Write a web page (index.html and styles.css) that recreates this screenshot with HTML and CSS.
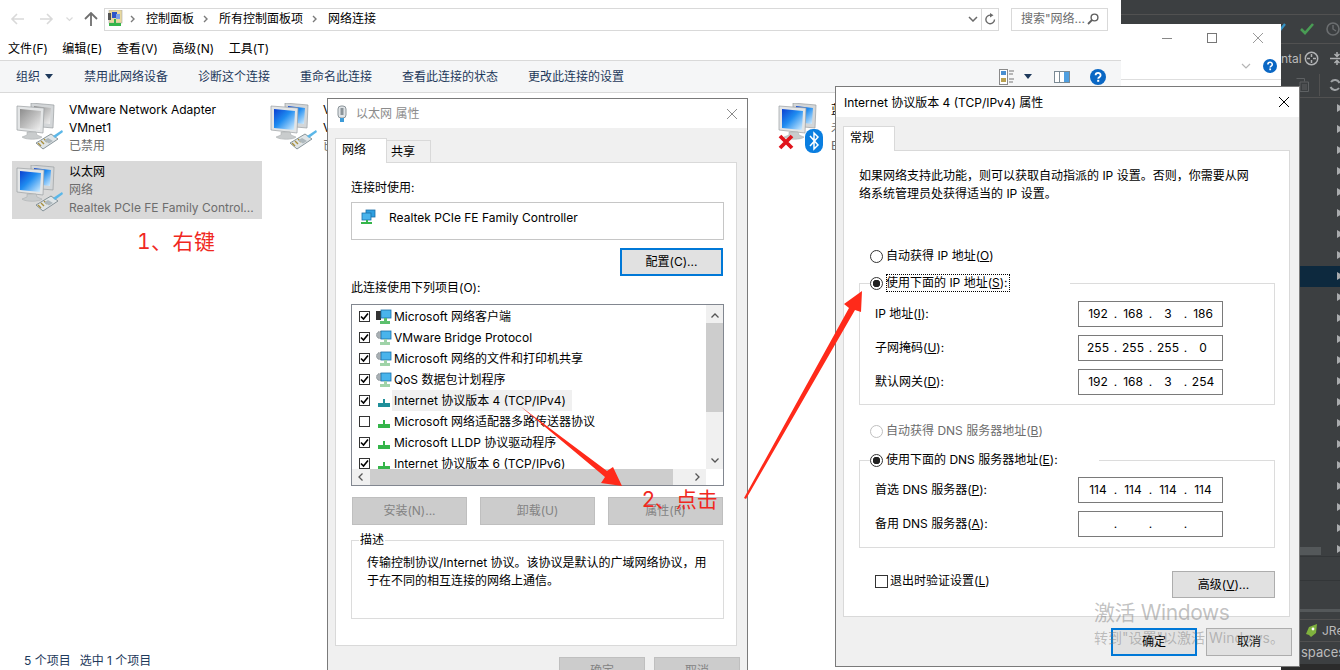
FILE: index.html
```html
<!DOCTYPE html>
<html lang="zh-CN">
<head>
  <meta charset="UTF-8" />
  <title>网络连接</title>
  <link rel="stylesheet" href="styles.css">
</head>
<body>

<svg class="defs" width="0" height="0">
  <defs>
    <linearGradient id="blue" x1="0" y1="0" x2="1" y2="1">
      <stop offset="0" stop-color="#0a3fd0"/><stop offset=".45" stop-color="#1f8cf0"/><stop offset="1" stop-color="#d8f0ff"/>
    </linearGradient>
    <linearGradient id="grey" x1="0" y1="0" x2="1" y2="1">
      <stop offset="0" stop-color="#8d8d8d"/><stop offset=".5" stop-color="#bdbdbd"/><stop offset="1" stop-color="#f2f2f2"/>
    </linearGradient>
    <symbol id="plug" viewBox="0 0 48 48">
      <path d="M20 40l15-9 7 5-15 10z" fill="#dfe4e6" stroke="#7d8a90" stroke-width=".9"/>
      <path d="M22 40l3 3M25 38l3 3M28 36l3 3" stroke="#a88f3d" stroke-width="1.400"/>
      <path d="M32 35l5 3-4 2.500-5-3z" fill="#aeb8bd"/>
      <path d="M37 33l9-6 1 2-8 6z" fill="#5bb7e8"/>
    </symbol>
    <symbol id="pc" viewBox="0 0 48 48">
      <path d="M15 0l23 2-1 23-22-2z" fill="#d3d6d8" stroke="#9a9da0" stroke-width=".7"/>
      <path d="M18 3l17 2-1 16-16-2z" fill="url(#blue)"/>
      <path d="M1 3l27 2-1 25-26-3z" fill="#e3e5e6" stroke="#9a9da0" stroke-width=".7"/>
      <path d="M4 6l21 2-1 19-20-2z" fill="url(#blue)"/>
      <path d="M11 29h9l1 3 5 2c-2 3-17 3-20 0l5-2z" fill="#c9cccd" stroke="#a5a8aa" stroke-width=".5"/>
      <use href="#plug" width="48" height="48"/>
    </symbol>
    <symbol id="pc-off" viewBox="0 0 48 48">
      <path d="M15 0l23 2-1 23-22-2z" fill="#d3d6d8" stroke="#9a9da0" stroke-width=".7"/>
      <path d="M18 3l17 2-1 16-16-2z" fill="url(#grey)"/>
      <path d="M1 3l27 2-1 25-26-3z" fill="#e3e5e6" stroke="#9a9da0" stroke-width=".7"/>
      <path d="M4 6l21 2-1 19-20-2z" fill="url(#grey)"/>
      <path d="M11 29h9l1 3 5 2c-2 3-17 3-20 0l5-2z" fill="#c9cccd" stroke="#a5a8aa" stroke-width=".5"/>
      <use href="#plug" width="48" height="48"/>
    </symbol>
    <symbol id="pc-bare" viewBox="0 0 48 48">
      <path d="M15 0l23 2-1 23-22-2z" fill="#d3d6d8" stroke="#9a9da0" stroke-width=".7"/>
      <path d="M18 3l17 2-1 16-16-2z" fill="url(#blue)"/>
      <path d="M1 3l27 2-1 25-26-3z" fill="#e3e5e6" stroke="#9a9da0" stroke-width=".7"/>
      <path d="M4 6l21 2-1 19-20-2z" fill="url(#blue)"/>
      <path d="M11 29h9l1 3 5 2c-2 3-17 3-20 0l5-2z" fill="#c9cccd" stroke="#a5a8aa" stroke-width=".5"/>
    </symbol>
    <symbol id="adapter" viewBox="0 0 16 16">
      <rect x="6" y="1" width="9" height="7" fill="#2e9fe0" stroke="#1c6fa8" stroke-width=".8"/>
      <rect x="2" y="4" width="9" height="7" fill="#49b4ec" stroke="#1c6fa8" stroke-width=".8"/>
      <path d="M6 11h2v2h4v2H1v-2h5z" fill="#35b54a"/>
    </symbol>
    <symbol id="service" viewBox="0 0 16 16">
      <circle cx="4" cy="5" r="3.500" fill="#a9b0b4" stroke="#7f878b" stroke-dasharray="1.200 .8"/>
      <rect x="5" y="1" width="10" height="8" fill="#49b4ec" stroke="#1c6fa8" stroke-width=".8"/>
      <path d="M8 9h3v3h3v3H4v-3h4z" fill="#9fd3a8"/>
    </symbol>
    <symbol id="client" viewBox="0 0 16 16">
      <rect x="0" y="2" width="5" height="9" fill="#333"/>
      <rect x="5" y="1" width="10" height="8" fill="#49b4ec" stroke="#1c6fa8" stroke-width=".8"/>
      <path d="M8 9h3v3h3v3H4v-3h4z" fill="#5cc06d"/>
    </symbol>
    <symbol id="proto" viewBox="0 0 16 16">
      <path d="M7 6h2v4h5v4H2v-4h5z" fill="#35b54a"/>
    </symbol>
    <symbol id="proto-teal" viewBox="0 0 16 16">
      <path d="M7 6h2v4h5v4H2v-4h5z" fill="#1f8f9a"/>
    </symbol>
    <symbol id="help" viewBox="0 0 16 16">
      <circle cx="8" cy="8" r="8" fill="#0a67c4"/>
      <path d="M5.600 6.200c0-3.200 5-3.200 5 0 0 2-2.400 2-2.400 3.600" fill="none" stroke="#fff" stroke-width="1.800"/>
      <rect x="7.200" y="10.800" width="2" height="2" fill="#fff"/>
    </symbol>
    <symbol id="close" viewBox="0 0 12 12">
      <path d="M1 1l10 10M11 1L1 11" fill="none" stroke="currentColor" stroke-width="1"/>
    </symbol>
    <symbol id="chev" viewBox="0 0 8 8">
      <path d="M2 1l3 3-3 3" fill="none" stroke="#7a7a7a" stroke-width="1.400"/>
    </symbol>
  </defs>
</svg>

<!-- IDE behind everything -->
<div class="window ide">
  <div class="ide-row ide-top"></div>
  <div class="ide-row ide-tools">
    <svg width="16" height="14" viewBox="0 0 16 14"><path d="M2 8l4 4 8-10" fill="none" stroke="#3592c4" stroke-width="2.400"/></svg>
    <svg class="ide-check" width="14" height="12" viewBox="0 0 14 12"><path d="M1 6l4 4 8-9" fill="none" stroke="#499c54" stroke-width="2.600"/></svg>
    <svg class="ide-clock" width="14" height="14" viewBox="0 0 14 14"><circle cx="7" cy="7" r="6" fill="none" stroke="#6b6e70" stroke-width="1.600"/><path d="M7 3v4l3 2" fill="none" stroke="#6b6e70" stroke-width="1.400"/></svg>
  </div>
  <div class="ide-row ide-tools ide-tools-2">
    <span class="ide-tab">ntal</span>
    <svg class="ide-target" width="15" height="15" viewBox="0 0 15 15"><circle cx="7.500" cy="7.500" r="6.200" fill="none" stroke="#afb1b3" stroke-width="1.500"/><path d="M7.500 3v3M7.500 9v3M3 7.500h3M9 7.500h3" stroke="#afb1b3" stroke-width="1.500"/></svg>
    <svg width="14" height="15" viewBox="0 0 14 15"><path d="M0 7.500h14M7 1v4M4.500 3L7 5.500L9.500 3M7 14v-4M4.500 12L7 9.500L9.500 12" fill="none" stroke="#afb1b3" stroke-width="1.500"/></svg>
  </div>
  <div class="ide-row ide-tools ide-tools-3">
    <svg width="13" height="14" viewBox="0 0 13 14"><path d="M.5.500h8v3M4 4h8.500v9.500H4z" fill="none" stroke="#5e6163"/><path d="M6 7h5M6 9h5M6 11h5" stroke="#5e6163"/></svg>
    <span class="ide-sep"></span>
    <svg width="12" height="14" viewBox="0 0 12 14"><path d="M10.500 5A5 5 0 0 0 2 4M1.500 9A5 5 0 0 0 10 10" fill="none" stroke="#9fa2a4" stroke-width="2"/></svg>
  </div>
  <div class="ide-tree">
    <div class="tree-row"></div><div class="tree-row"></div><div class="tree-row"></div><div class="tree-row"></div>
    <div class="tree-row"></div><div class="tree-row"></div><div class="tree-row"></div><div class="tree-row"></div>
    <div class="tree-row selected"></div><div class="tree-row"></div><div class="tree-row"></div><div class="tree-row"></div>
    <div class="tree-row"></div><div class="tree-row"></div><div class="tree-row"></div><div class="tree-row"></div>
    <div class="tree-row"></div><div class="tree-row"></div><div class="tree-row"></div><div class="tree-row"></div>
    <div class="tree-row"></div><div class="tree-row last"></div>
  </div>
  <div class="ide-bottom">
    <div class="ide-sec"></div>
    <div class="ide-bar"></div>
    <div class="ide-run">
      <svg width="15" height="15" viewBox="0 0 15 15"><path d="M13 1L5 4 2 11l3 1 2 2 5-4z" fill="#7fb23e"/><circle cx="9" cy="6" r="1.400" fill="#fff"/></svg>
      <span>JRel</span>
    </div>
    <div class="ide-spaces">spaces</div>
  </div>
  <div class="ide-foot"></div>
</div>

<!-- window behind the explorer -->
<div class="window backwin">
  <div class="backwin-title">
    <span class="ctl-min"></span>
    <span class="ctl-max"></span>
    <svg class="ctl-x" width="12" height="12"><use href="#close"/></svg>
  </div>
  <div class="backwin-tools">
    <svg width="10" height="6" viewBox="0 0 10 6"><path d="M1 1l4 4 4-4" fill="none" stroke="#b5b5b5" stroke-width="1.200"/></svg>
    <svg width="14" height="14"><use href="#help"/></svg>
  </div>
</div>

<!-- explorer -->
<div class="window explorer">
  <div class="nav">
    <svg class="nav-btn" width="14" height="12" viewBox="0 0 14 12"><path d="M7 1L2 6l5 5M2 6h12" fill="none" stroke="#d9d9d9" stroke-width="1.600"/></svg>
    <svg class="nav-btn fwd" width="14" height="12" viewBox="0 0 14 12"><path d="M7 1l5 5-5 5M12 6H0" fill="none" stroke="#d9d9d9" stroke-width="1.600"/></svg>
    <svg class="nav-btn down" width="7" height="5" viewBox="0 0 7 5"><path d="M.5.500l3 3 3-3" fill="none" stroke="#d9d9d9" stroke-width="1.200"/></svg>
    <svg class="nav-btn up" width="14" height="14" viewBox="0 0 14 14"><path d="M1 7l6-6 6 6M7 1v13" fill="none" stroke="#6f6f6f" stroke-width="1.800"/></svg>
    <div class="address">
      <svg class="address-icon" width="16" height="18" viewBox="0 0 16 18">
        <rect x="2" y="0" width="13" height="13" fill="#e8d9a0" stroke="#a9a9a9" stroke-width=".6"/>
        <rect x="5" y="2" width="5" height="6" fill="#2c55c8"/><rect x="9" y="4" width="4" height="5" fill="#7aa0e8"/>
        <rect x="1" y="3" width="3" height="7" fill="#555"/>
        <path d="M7 9h2v4h5v3H2v-3h5z" fill="#35b54a"/>
      </svg>
      <svg class="crumb-sep" width="8" height="8"><use href="#chev"/></svg>
      <span>控制面板</span>
      <svg class="crumb-sep" width="8" height="8"><use href="#chev"/></svg>
      <span>所有控制面板项</span>
      <svg class="crumb-sep" width="8" height="8"><use href="#chev"/></svg>
      <span>网络连接</span>
      <svg class="address-drop" width="10" height="6" viewBox="0 0 10 6"><path d="M1 1l4 4 4-4" fill="none" stroke="#6a6a6a" stroke-width="1.500"/></svg>
      <span class="address-refresh">
        <svg width="11" height="12" viewBox="0 0 11 12"><path d="M9.500 6.500A4.300 4.300 0 1 1 6 2.200" fill="none" stroke="#6a6a6a" stroke-width="1.400"/><path d="M5 0l3.500 2.200L5 4.500z" fill="#6a6a6a"/></svg>
      </span>
    </div>
    <div class="search">
      <span>搜索"网络...</span>
      <svg width="12" height="12" viewBox="0 0 12 12"><circle cx="7.500" cy="4.500" r="3.400" fill="none" stroke="#5f5f5f" stroke-width="1.400"/><path d="M5 7L1 11" stroke="#5f5f5f" stroke-width="1.800"/></svg>
    </div>
  </div>
  <div class="menu">
    <span>文件(F)</span><span>编辑(E)</span><span>查看(V)</span><span>高级(N)</span><span>工具(T)</span>
  </div>
  <div class="toolbar">
    <span class="organize">组织<i class="caret"></i></span>
    <span>禁用此网络设备</span>
    <span>诊断这个连接</span>
    <span>重命名此连接</span>
    <span>查看此连接的状态</span>
    <span>更改此连接的设置</span>
    <div class="toolbar-right">
      <svg width="16" height="16" viewBox="0 0 16 16"><rect x=".5" y=".5" width="8" height="15" fill="#fff" stroke="#8a8a8a"/><rect x="2" y="2" width="5" height="4" fill="#4a8fd0"/><rect x="2" y="9" width="5" height="4" fill="#b9a050"/><path d="M10 2h5M10 5h4M10 10h5M10 13h4" stroke="#777" stroke-width="1"/></svg>
      <i class="caret"></i>
      <svg class="pane-icon" width="16" height="12" viewBox="0 0 16 12"><rect x=".5" y=".5" width="15" height="11" fill="#fff" stroke="#7b8a94"/><rect x="5" y="1" width="1" height="10" fill="#7b8a94"/><rect x="10" y="1" width="5" height="10" fill="#4f9fe0"/></svg>
      <svg class="help-icon" width="16" height="16"><use href="#help"/></svg>
    </div>
  </div>
  <div class="items">
    <div class="item">
      <svg width="48" height="48"><use href="#pc-off"/></svg>
      <div class="item-text"><div>VMware Network Adapter<br>VMnet1</div><div class="dim">已禁用</div></div>
    </div>
    <div class="item">
      <svg width="48" height="48"><use href="#pc"/></svg>
      <div class="item-text"><div>VMware Network Adapter<br>VMnet8</div><div class="dim">已启用</div></div>
    </div>
    <div class="item">
      <svg width="48" height="48"><use href="#pc"/></svg>
      <div class="item-text"><div>WLAN</div><div class="dim">未连接</div><div class="dim">Microsoft Wi-Fi Direct Virt...</div></div>
    </div>
    <div class="item">
      <div class="item-icon">
        <svg width="48" height="48"><use href="#pc-bare"/></svg>
        <svg class="badge-x" width="16" height="16" viewBox="0 0 16 16"><path d="M2 2l12 12M14 2L2 14" stroke="#e0141c" stroke-width="3.800"/></svg>
        <svg class="badge-bt" width="18" height="24" viewBox="0 0 18 24"><rect width="18" height="24" rx="8" fill="#0a7ee0"/><path d="M5 7l8 9-4 4V4l4 4-8 9" fill="none" stroke="#fff" stroke-width="1.500"/></svg>
      </div>
      <div class="item-text"><div>蓝牙网络连接</div><div class="dim">未连接</div><div class="dim">Bluetooth Device</div></div>
    </div>
    <div class="item is-selected">
      <svg width="48" height="48"><use href="#pc"/></svg>
      <div class="item-text"><div>以太网</div><div class="dim">网络</div><div class="dim nowrap">Realtek PCIe FE Family Control...</div></div>
    </div>
  </div>
  <div class="status"><span>5 个项目</span><span>选中 1 个项目</span></div>
</div>

<!-- ethernet properties -->
<div class="window dialog props">
  <div class="dlg-title">
    <svg width="12" height="18" viewBox="0 0 12 18"><rect x="2" y="1" width="8" height="12" rx="3" fill="#dfe3e6" stroke="#8b9499"/><rect x="4.500" y="3" width="3" height="7" fill="#8b9499"/><rect x="4" y="13" width="4" height="4" fill="#3d9bd8"/></svg>
    <span class="dlg-title-text">以太网 属性</span>
    <svg class="dlg-close" width="12" height="12"><use href="#close"/></svg>
  </div>
  <div class="dlg-body">
    <div class="tabs">
      <div class="tab active">网络</div>
      <div class="tab">共享</div>
    </div>
    <div class="panel props-panel">
      <p class="text">连接时使用:</p>
      <div class="adapter-box">
        <svg width="16" height="16"><use href="#adapter"/></svg>
        <span>Realtek PCIe FE Family Controller</span>
      </div>
      <div class="btn-row">
        <button class="btn focused config">配置(C)...</button>
      </div>
      <p class="text list-label">此连接使用下列项目(O):</p>
      <div class="list">
        <div class="list-rows">
          <div class="list-row"><i class="check on"></i><svg width="16" height="16"><use href="#client"/></svg><span>Microsoft 网络客户端</span></div>
          <div class="list-row"><i class="check on"></i><svg width="16" height="16"><use href="#service"/></svg><span>VMware Bridge Protocol</span></div>
          <div class="list-row"><i class="check on"></i><svg width="16" height="16"><use href="#service"/></svg><span>Microsoft 网络的文件和打印机共享</span></div>
          <div class="list-row"><i class="check on"></i><svg width="16" height="16"><use href="#service"/></svg><span>QoS 数据包计划程序</span></div>
          <div class="list-row"><i class="check on"></i><svg width="16" height="16"><use href="#proto-teal"/></svg><span class="row-hl">Internet 协议版本 4 (TCP/IPv4)</span></div>
          <div class="list-row"><i class="check"></i><svg width="16" height="16"><use href="#proto"/></svg><span>Microsoft 网络适配器多路传送器协议</span></div>
          <div class="list-row"><i class="check on"></i><svg width="16" height="16"><use href="#proto"/></svg><span>Microsoft LLDP 协议驱动程序</span></div>
          <div class="list-row"><i class="check on"></i><svg width="16" height="16"><use href="#proto"/></svg><span>Internet 协议版本 6 (TCP/IPv6)</span></div>
        </div>
        <div class="vscroll">
          <svg width="8" height="5" viewBox="0 0 8 5"><path d="M.5 4.500L4 1l3.500 3.500" fill="none" stroke="#555" stroke-width="1.300"/></svg>
          <div class="vscroll-track"><div class="vscroll-thumb"></div></div>
          <svg width="8" height="5" viewBox="0 0 8 5"><path d="M.5.500L4 4 7.500.500" fill="none" stroke="#555" stroke-width="1.300"/></svg>
        </div>
        <div class="hscroll">
          <svg width="5" height="8" viewBox="0 0 5 8"><path d="M4.500.500L1 4l3.500 3.500" fill="none" stroke="#555" stroke-width="1.300"/></svg>
          <div class="hscroll-track"><div class="hscroll-thumb"></div></div>
          <svg width="5" height="8" viewBox="0 0 5 8"><path d="M.500.500L4 4 .500 7.500" fill="none" stroke="#555" stroke-width="1.300"/></svg>
        </div>
      </div>
      <div class="list-btns">
        <button class="btn disabled">安装(N)...</button>
        <button class="btn disabled">卸载(U)</button>
        <button class="btn disabled">属性(R)</button>
      </div>
      <fieldset class="desc">
        <legend>描述</legend>
        <p>传输控制协议/Internet 协议。该协议是默认的广域网络协议，用于在不同的相互连接的网络上通信。</p>
      </fieldset>
    </div>
    <div class="dlg-actions">
      <button class="btn disabled small">确定</button>
      <button class="btn disabled small">取消</button>
    </div>
  </div>
</div>

<!-- ipv4 properties -->
<div class="window dialog ipv4">
  <div class="dlg-title ipv4-title">
    <span>Internet 协议版本 4 (TCP/IPv4) 属性</span>
    <svg class="dlg-close" width="12" height="12"><use href="#close"/></svg>
  </div>
  <div class="dlg-body ipv4-body">
    <div class="tabs">
      <div class="tab active">常规</div>
    </div>
    <div class="panel ipv4-panel">
      <p class="text intro">如果网络支持此功能，则可以获取自动指派的 IP 设置。否则，你需要从网络系统管理员处获得适当的 IP 设置。</p>
      <div class="radio-row first-radio"><i class="radio"></i><span>自动获得 IP 地址(<u>O</u>)</span></div>
      <fieldset class="group ip-group">
        <legend class="radio-row"><i class="radio on"></i><span class="focus-label">使用下面的 IP 地址(<u>S</u>):</span></legend>
        <div class="field-row"><label>IP 地址(<u>I</u>):</label>
          <div class="ip"><b>192</b><i>.</i><b>168</b><i>.</i><b>3</b><i>.</i><b>186</b></div></div>
        <div class="field-row"><label>子网掩码(<u>U</u>):</label>
          <div class="ip"><b>255</b><i>.</i><b>255</b><i>.</i><b>255</b><i>.</i><b>0</b></div></div>
        <div class="field-row"><label>默认网关(<u>D</u>):</label>
          <div class="ip"><b>192</b><i>.</i><b>168</b><i>.</i><b>3</b><i>.</i><b>254</b></div></div>
      </fieldset>
      <div class="radio-row dns-auto"><i class="radio off"></i><span>自动获得 DNS 服务器地址(<u>B</u>)</span></div>
      <fieldset class="group dns-group">
        <legend class="radio-row"><i class="radio on"></i><span>使用下面的 DNS 服务器地址(<u>E</u>):</span></legend>
        <div class="field-row"><label>首选 DNS 服务器(<u>P</u>):</label>
          <div class="ip"><b>114</b><i>.</i><b>114</b><i>.</i><b>114</b><i>.</i><b>114</b></div></div>
        <div class="field-row"><label>备用 DNS 服务器(<u>A</u>):</label>
          <div class="ip"><b></b><i>.</i><b></b><i>.</i><b></b><i>.</i><b></b></div></div>
      </fieldset>
      <div class="validate-row">
        <div class="validate"><i class="check"></i><span>退出时验证设置(<u>L</u>)</span></div>
        <button class="btn advanced">高级(<u>V</u>)...</button>
      </div>
    </div>
    <div class="dlg-actions ipv4-actions">
      <button class="btn focused small">确定</button>
      <button class="btn small">取消</button>
    </div>
  </div>
</div>

<!-- annotations on top of the screenshot -->
<svg class="arrows" width="1340" height="670" viewBox="0 0 1340 670">
  <polygon points="520,406 607,471 613,467 622,486 601,483 605,477" fill="#ff2a1a"/>
  <polygon points="744,498 849,308 844,304 862,291 861,312 855,310 746,499" fill="#ff2a1a"/>
</svg>
<div class="note note-1">1、右键</div>
<div class="note note-2">2、点击</div>

<div class="activate">
  <div class="activate-big">激活 Windows</div>
  <div class="activate-small">转到"设置"以激活 Windows。</div>
</div>

</body>
</html>
```

FILE: styles.css
```css
* {
  box-sizing: border-box;
  margin: 0;
  padding: 0;
}

body {
  position: relative;
  width: 1340px;
  height: 670px;
  overflow: hidden;
  background: #3c3f41;
  font-family: "Inter", "Noto Sans CJK SC", sans-serif;
  font-size: 12px;
  line-height: 18px;
  color: #000;
}

i { font-style: normal; }

.defs { position: absolute; }

.window { position: absolute; }

/* ide */
.ide {
  left: 1121px;
  top: 0;
  width: 219px;
  height: 670px;
  overflow: hidden;
  background: #3c3f41;
  color: #bbb;
}

.ide-row {
  display: flex;
  align-items: center;
  padding-left: 150px;
  border-bottom: 1px solid #515151;
}

.ide-row svg, .ide-row span { flex-shrink: 0; }

.ide-top { height: 15px; }
.ide-tools { height: 29px; }
.ide-tools-2 { padding-left: 160px; border-bottom: 0; }
.ide-tools-3 { height: 25px; padding-left: 175px; }
.ide-check { margin-left: 13px; }
.ide-clock { margin-left: 12px; }
.ide-tab { width: 23px; overflow: hidden; }
.ide-target { margin-right: 11px; }
.ide-sep { width: 1px; height: 22px; margin: 0 9px 0 10px; background: #515151; }

.tree-row {
  position: relative;
  height: 21px;
}

.tree-row::after {
  content: "";
  position: absolute;
  right: -4px;
  top: 6px;
  border: 4.500px solid transparent;
  border-left: 7px solid #a9abad;
  border-right: 0;
}

.tree-row.selected { background: #0d293e; }

.tree-row.last {
  background: linear-gradient(#54585a, #54585a) 179px 8px / 21px 8px no-repeat;
}

.ide-bottom { padding-left: 179px; }
.ide-sec { height: 25px; margin-top: -4px; border-top: 1px solid #333638; border-bottom: 1px solid #333638; }
.ide-bar { height: 3px; margin-top: 28px; background: #54585a; }

.ide-run {
  display: flex;
  align-items: center;
  gap: 3px;
  height: 23px;
  margin-top: 7px;
  border-top: 1px solid #515151;
  border-bottom: 1px solid #515151;
  padding-left: 4px;
}

.ide-run svg { flex-shrink: 0; }
.ide-spaces { height: 22px; padding: 1px 0 0 1px; font-size: 13px; white-space: nowrap; }
.ide-foot { height: 7px; background: #2b2b2b; }

/* window behind explorer */
.backwin {
  left: 1121px;
  top: 24px;
  width: 160px;
  height: 646px;
  background: #fff;
}

.backwin-title {
  display: flex;
  align-items: center;
  height: 28px;
  color: #9a9a9a;
}

.ctl-min { width: 10px; height: 1px; margin-left: 41px; background: #888; }
.ctl-max { width: 10px; height: 10px; margin-left: 35px; border: 1px solid #777; }
.ctl-x { margin-left: 35px; }

.backwin-tools {
  display: flex;
  justify-content: flex-end;
  align-items: center;
  gap: 12px;
  height: 28px;
  padding-right: 4px;
  border-bottom: 1px solid #dedede;
}

/* explorer */
.explorer {
  left: 0;
  top: 0;
  width: 1121px;
  height: 670px;
  display: flex;
  flex-direction: column;
  background: #fff;
}

.nav {
  display: flex;
  align-items: center;
  height: 37px;
  padding: 1px 13px 0 10px;
  flex-shrink: 0;
}

.nav-btn.fwd { margin-left: 16px; }
.nav-btn.down { margin-left: 12px; }
.nav-btn.up { margin-left: 11px; }

.address {
  display: flex;
  align-items: center;
  width: 895px;
  height: 23px;
  margin-left: 6px;
  padding-left: 2px;
  border: 1px solid #d9d9d9;
  font-size: 12px;
}

.crumb-sep { margin: 0 9px 0 8px; }
.address-icon + .crumb-sep { margin: 0 9px 0 6px; }

.address-drop { margin-left: auto; margin-right: 3px; }

.address-refresh {
  display: flex;
  align-items: center;
  justify-content: center;
  width: 17px;
  height: 21px;
  border-left: 1px solid #d9d9d9;
}

.search {
  display: flex;
  align-items: center;
  justify-content: space-between;
  width: 97px;
  height: 23px;
  margin-left: 12px;
  padding: 0 8px 0 9px;
  border: 1px solid #d9d9d9;
  color: #6d6d6d;
}

.menu {
  display: flex;
  align-items: center;
  gap: 14.5px;
  height: 23px;
  padding: 1px 0 0 8px;
  flex-shrink: 0;
}

.toolbar {
  display: flex;
  align-items: center;
  gap: 30px;
  height: 33px;
  padding: 0 15px 0 16px;
  background: #f5f6f7;
  border-top: 1px solid #d9d9d9;
  border-bottom: 1px solid #d9d9d9;
  color: #1e395b;
  flex-shrink: 0;
}

.organize { display: flex; align-items: center; gap: 5px; margin-right: 1px; }

.caret {
  display: inline-block;
  border: 4px solid transparent;
  border-top: 5px solid #1e395b;
  border-bottom: 0;
}

.toolbar-right {
  display: flex;
  align-items: center;
  margin-left: auto;
}

.toolbar-right .caret { margin-left: 9px; }
.pane-icon { margin-left: 22px; }
.help-icon { margin-left: 20px; }

.items {
  display: grid;
  grid-template-columns: repeat(4, 250px);
  grid-auto-rows: 58px;
  column-gap: 4px;
  row-gap: 4px;
  padding: 6px 0 0 12px;
}

.item {
  display: flex;
  gap: 5px;
  padding: 2px 4px 0;
  white-space: nowrap;
}

.item > svg, .item-icon { margin-top: 2px; flex-shrink: 0; }

.item-icon { position: relative; width: 48px; height: 48px; }
.badge-x { position: absolute; left: 0; top: 31px; }
.badge-bt { position: absolute; left: 27px; top: 26px; }

.item.is-selected { background: #d9d9d9; overflow: hidden; }
.dim { color: #6d6d6d; }

.status {
  display: flex;
  gap: 9px;
  margin-top: auto;
  height: 18px;
  padding-left: 24px;
  color: #1e395b;
}

/* dialogs */
.dialog {
  background: #f0f0f0;
  box-shadow: 0 0 0 1px #7a7a7a;
}

.props {
  left: 328px;
  top: 99px;
  width: 419px;
  height: 580px;
}

.ipv4 {
  left: 836px;
  top: 87px;
  width: 463px;
  height: 579px;
}

.dlg-title {
  display: flex;
  align-items: center;
  gap: 8px;
  height: 29px;
  padding: 0 9px 0 8px;
  background: #fff;
}

.dlg-title-text { color: #8c8c8c; }
.props .dlg-close { margin-left: auto; color: #8c8c8c; }
.ipv4 .dlg-close { margin-left: auto; }

.ipv4-title { height: 30px; }
.ipv4-title span { padding-top: 2px; }

.dlg-body { padding: 9px 10px 0 7px; }

.tabs {
  display: flex;
  align-items: flex-end;
  height: 25px;
}

.ipv4-body .tabs { height: 24px; }

.tab {
  width: 45px;
  height: 22px;
  padding-left: 4px;
  border: 1px solid #d9d9d9;
  border-bottom: 0;
  line-height: 22px;
  margin-left: -1px;
}

.tab.active {
  position: relative;
  width: 52px;
  height: 25px;
  margin: 0 0 -1px 0;
  padding-left: 6px;
  background: #fff;
  line-height: 21px;
  z-index: 1;
}

.panel {
  background: #fff;
  border: 1px solid #d9d9d9;
}

.props-panel {
  height: 484px;
  padding: 16px 12px 0 15px;
}

.adapter-box {
  display: flex;
  align-items: flex-start;
  gap: 13px;
  height: 38px;
  margin-top: 5px;
  padding: 6px 0 0 8px;
  border: 1px solid #c6c6c6;
}

.btn-row { display: flex; justify-content: flex-end; margin-top: 8px; padding-right: 1px; }

.btn {
  height: 28px;
  background: #e1e1e1;
  border: 1px solid #adadad;
  font: inherit;
  color: #000;
}

.btn.focused { border: 2px solid #0078d7; }
.btn.config { width: 103px; }

.btn.disabled {
  background: #cccccc;
  border-color: #bfbfbf;
  color: #838383;
}

.list-label { margin-top: 3px; }

.list {
  display: grid;
  grid-template-columns: 1fr 17px;
  grid-template-rows: 164px 16px;
  height: 182px;
  margin-top: 7px;
  border: 1px solid #828790;
}

.list-rows { overflow: hidden; padding-top: 1px; }

.list-row {
  display: flex;
  align-items: center;
  height: 21px;
  padding-left: 7px;
  white-space: nowrap;
}

.check {
  display: block;
  flex-shrink: 0;
  width: 11px;
  height: 11px;
  margin-right: 6px;
  border: 1px solid #333;
  background: #fff;
}

.check.on {
  background:
    url("data:image/svg+xml,%3Csvg xmlns='http://www.w3.org/2000/svg' viewBox='0 0 9 9'%3E%3Cpath d='M1 4.500l2.500 2.500L8 1.500' fill='none' stroke='%23000' stroke-width='1.600'/%3E%3C/svg%3E") center / 9px 9px no-repeat #fff;
}

.list-row svg { margin-right: 2px; flex-shrink: 0; }

.row-hl {
  height: 21px;
  margin-left: -2px;
  padding: 0 6px 0 2px;
  background: #f0f0f0;
  line-height: 21px;
}

.vscroll {
  grid-row: 1;
  grid-column: 2;
  display: flex;
  flex-direction: column;
  align-items: center;
  justify-content: space-between;
  padding: 8px 0 6px;
  background: #f0f0f0;
}

.vscroll-track { flex: 1; width: 100%; margin-top: 5px; }
.vscroll-thumb { height: 89px; background: #cdcdcd; }

.hscroll {
  grid-row: 2;
  grid-column: 1;
  display: flex;
  align-items: center;
  justify-content: space-between;
  padding: 0 6px;
  background: #f0f0f0;
}

.hscroll-track { flex: 1; height: 100%; margin: 0 5px 0 7px; }
.hscroll-thumb { width: 303px; height: 100%; background: #cdcdcd; }

.list-btns {
  display: flex;
  gap: 13px;
  margin: 11px 1px 0 1px;
}

.list-btns .btn { width: 115px; }

.desc {
  height: 88px;
  margin-top: 6px;
  padding: 5px 12px 0 15px;
  border: 1px solid #dcdcdc;
}

.desc legend { margin-left: -8px; padding: 0 1px; }

.dlg-actions {
  display: flex;
  justify-content: flex-end;
  gap: 9px;
  margin: 11px -3px 0 0;
}

.btn.small { width: 86px; }

/* ipv4 */
.ipv4-panel {
  height: 467px;
  padding: 16px 14px 0 15px;
}

.ipv4-body { padding-right: 9px; }

.intro { width: 393px; }

.radio-row {
  display: flex;
  align-items: center;
  gap: 3px;
  height: 20px;
}

.first-radio { margin: 43px 0 0 11px; }

.radio {
  display: block;
  flex-shrink: 0;
  width: 13px;
  height: 13px;
  border: 1px solid #333;
  border-radius: 50%;
  background: #fff;
}

.radio.on {
  background: radial-gradient(circle, #222 0 3.500px, #fff 4px);
}

.radio.off { border-color: #bfbfbf; }

.dns-auto { margin: 16px 0 0 11px; color: #6d6d6d; }

.group {
  border: 1px solid #dcdcdc;
  padding: 8px 51px 9px 15px;
}

.group legend { margin-left: -5px; background: #fff; }
.ip-group { margin-top: 7px; }
.ip-group legend { width: 200px; }
.dns-group { margin-top: 9px; padding: 7px 51px 10px 15px; }
.dns-group legend { width: 229px; }

.focus-label {
  outline: 1px dotted #000;
  outline-offset: -1px;
  padding-right: 2px;
}

.field-row {
  display: grid;
  grid-template-columns: 1fr 145px;
  align-items: center;
  height: 26px;
}

.field-row + .field-row { margin-top: 8px; }

.ip {
  display: flex;
  height: 26px;
  padding-left: 5px;
  border: 1px solid #7a7a7a;
  line-height: 23px;
}

.ip b { width: 28px; font-weight: normal; text-align: center; }
.ip i { width: 7px; text-align: center; }

.validate-row {
  display: flex;
  justify-content: space-between;
  align-items: flex-start;
  margin-top: 23px;
}

.validate { display: flex; align-items: center; padding: 1px 0 0 16px; }
.validate .check { width: 13px; height: 13px; margin-right: 2px; }

.btn.advanced { width: 103px; height: 27px; }

.ipv4-actions { margin-top: 11px; margin-right: -2px; }

/* annotations */
.arrows { position: absolute; left: 0; top: 0; }

.note {
  position: absolute;
  color: #f0281e;
  font-size: 21px;
  line-height: 26px;
}

.note-1 { left: 137px; top: 229px; font-variant-numeric: tabular-nums; letter-spacing: .5px; }
.note-2 { left: 642px; top: 487px; }

.activate {
  position: absolute;
  left: 1094px;
  top: 598px;
  color: rgba(120, 120, 120, 0.45);
  white-space: nowrap;
}

.activate-big { font-size: 21px; line-height: 29px; letter-spacing: -.4px; }
.activate-small { font-size: 14px; line-height: 20px; margin-top: 1px; }
```
